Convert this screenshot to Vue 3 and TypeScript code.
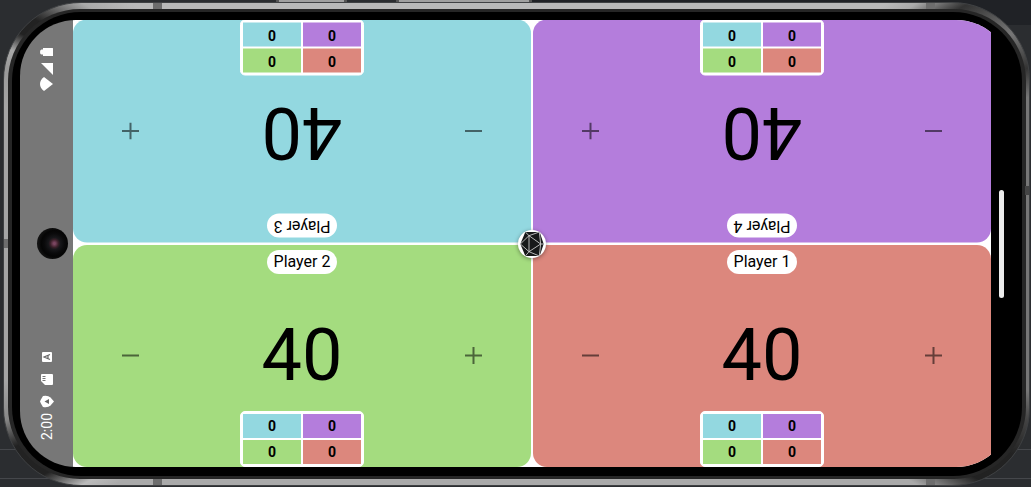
<script setup lang="ts">
import { ref } from 'vue'

type Tone = 'cyan' | 'purple' | 'green' | 'red'

interface Player {
  id: number
  name: string
  tone: Tone
  life: number
  flipped: boolean
  damage: number[]
}

const players = ref<Player[]>([
  { id: 3, name: 'Player 3', tone: 'cyan', life: 40, flipped: true, damage: [0, 0, 0, 0] },
  { id: 4, name: 'Player 4', tone: 'purple', life: 40, flipped: true, damage: [0, 0, 0, 0] },
  { id: 2, name: 'Player 2', tone: 'green', life: 40, flipped: false, damage: [0, 0, 0, 0] },
  { id: 1, name: 'Player 1', tone: 'red', life: 40, flipped: false, damage: [0, 0, 0, 0] },
])

const seats: Tone[][] = [['cyan', 'purple'], ['green', 'red']]

// Flipped cards are turned half a circle, so their seat map is read backwards.
function seatRows(p: Player): Tone[][] {
  return p.flipped ? [...seats].reverse().map((row) => [...row].reverse()) : seats
}
</script>

<template>
  <div class="desk">
    <i class="key key-power"></i>
    <i class="key key-volume"></i>
    <div class="phone">
      <i class="seam seam-top seam-start"></i>
      <i class="seam seam-top seam-end"></i>
      <i class="seam seam-bottom seam-start"></i>
      <i class="seam seam-bottom seam-end"></i>
      <i class="seam seam-left"></i>
      <i class="seam seam-right"></i>
      <div class="rim">
        <div class="bezel">
          <div class="screen">
            <header class="status">
              <svg class="glyph" width="14" height="10" viewBox="0 0 14 10">
                <path fill="#fff" d="M3 1h9.500q.5 0 .5.5v7q0 .5-.5.5H3V7.500H1.500Q0 7.500 0 5t1.500-2.500H3z" />
              </svg>
              <svg class="glyph signal" width="14" height="14" viewBox="0 0 14 14">
                <path fill="#fff" d="M1 1h12v12z" />
              </svg>
              <svg class="glyph" width="14" height="16" viewBox="0 0 14 16">
                <path fill="#fff" d="M13 8 4 15Q0 12 0 8t4-7z" />
              </svg>
              <span class="spacer"></span>
              <svg class="glyph" width="14" height="10" viewBox="0 0 14 10">
                <rect x="2" width="10" height="10" rx="1" fill="#fff" />
                <path fill="none" stroke="#666" stroke-width="1.200" d="M10 2.500 4 5l6 2.500M8 3v4" />
              </svg>
              <svg class="glyph sd" width="14" height="12" viewBox="0 0 14 12">
                <path fill="#fff" d="M2 0h10q1 0 1 1v9q0 1-1 1H5L1 7V1q0-1 1-1z" />
                <path stroke="#777" stroke-width="1" d="M2.500 2.500h3M2.500 4.500h3M2.500 6.500h3" />
              </svg>
              <svg class="glyph shield" width="14" height="13" viewBox="0 0 14 13">
                <path fill="#fff" d="M0 6.500Q1 4 3 1q5-1 7.500 1.500L14 6.500l-3.500 4Q8 13 3 12 1 9 0 6.500z" />
                <path fill="#666" d="M4.500 6.500 9 4v5z" />
              </svg>
              <time class="clock">2:00</time>
            </header>
            <i class="camera"></i>

            <main class="board">
              <section
                v-for="p in players"
                :key="p.id"
                class="card"
                :class="[p.tone, { flipped: p.flipped }]"
              >
                <div class="controls">
                  <button type="button" :aria-label="`${p.name}: lose life`" @click="p.life--">
                    <svg width="17" height="17" viewBox="0 0 17 17"><path d="M0 8.500h17" /></svg>
                  </button>
                  <output class="life">{{ p.life }}</output>
                  <button type="button" :aria-label="`${p.name}: gain life`" @click="p.life++">
                    <svg width="17" height="17" viewBox="0 0 17 17"><path d="M0 8.500h17M8.500 0v17" /></svg>
                  </button>
                </div>
                <h2 class="name">{{ p.name }}</h2>
                <table class="damage" :aria-label="`Damage dealt to ${p.name}`">
                  <tbody>
                    <tr v-for="(row, r) in seatRows(p)" :key="r">
                      <td v-for="(tone, c) in row" :key="c" :class="tone">{{ p.damage[r * 2 + c] }}</td>
                    </tr>
                  </tbody>
                </table>
              </section>
              <button type="button" class="dice" aria-label="Roll dice">
                <svg width="24" height="26" viewBox="0 0 72 78">
                  <path fill="#17191a" d="M16 3h43l12 36-12 36H16L1 39z" />
                  <path
                    fill="none"
                    stroke="#d8d8d8"
                    stroke-width="2.500"
                    d="M27 14v48l35-23zM27 14 1 39l26 23 31 13 4-36-4-36zM16 3l11 11M16 75l11-13M62 39h9"
                  />
                </svg>
              </button>
            </main>

            <nav class="gesture"><i class="handle"></i></nav>
          </div>
        </div>
      </div>
    </div>
  </div>
</template>

<style>
body {
  margin: 0;
  background: #2b2d30;
}
</style>

<style scoped>
.desk {
  position: relative;
  box-sizing: border-box;
  display: flex;
  min-height: 100vh;
  padding: 2px 1px 1px 3px;
  background:
    linear-gradient(#45474b, #45474b) 0 449px / 100% 1px no-repeat,
    linear-gradient(#45474b, #45474b) 0 478px / 100% 1px no-repeat,
    linear-gradient(#202226, #202226) 100% 0 / 50% 25px no-repeat,
    #2b2d30;
  font-family: Roboto, "Liberation Sans", sans-serif;
  color: #000;
}

.key {
  position: absolute;
  top: 0;
  height: 2px;
  background: #a0a0a0;
  border: solid #555;
  border-width: 0 3px;
}

.key-power {
  left: 276px;
  width: 65px;
}

.key-volume {
  left: 396px;
  width: 130px;
}

.phone {
  position: relative;
  flex: 1;
  display: flex;
  box-sizing: border-box;
  padding: 6px 3px 6px 4px;
  border: 1px solid #3f4143;
  border-radius: 78px;
  background: conic-gradient(
    #b9b9b9 0 57deg,
    #aaa 59deg,
    #333 62deg,
    #777 67deg,
    #333 71deg,
    #777 74deg,
    #777 106deg,
    #444 109deg,
    #222 113deg,
    #222 117deg,
    #aaa 121deg,
    #aaa 239deg,
    #bbb 241deg,
    #222 244deg,
    #222 248deg,
    #888 251deg,
    #a5a5a5 255deg,
    #a5a5a5 285deg,
    #999 289deg,
    #aaa 291deg,
    #222 293deg,
    #222 295deg,
    #aaa 299deg,
    #b9b9b9 302deg
  );
}

.seam {
  position: absolute;
  background: #6d6d6d;
}

.seam-top,
.seam-bottom {
  width: 9px;
  height: 6px;
}

.seam-top { top: 0; }
.seam-bottom { bottom: 0; }
.seam-start { left: 149px; }
.seam-end { right: 94px; }

.seam-left,
.seam-right {
  width: 4px;
  height: 9px;
}

.seam-left { left: 0; top: 236px; }
.seam-right { right: 0; top: 183px; background: #444; }

.rim {
  flex: 1;
  display: flex;
  padding: 3px 4px;
  border-radius: 72px;
  background: #262626;
}

.bezel {
  flex: 1;
  display: flex;
  box-sizing: border-box;
  padding: 8px 10px 9px 8px;
  border-radius: 69px;
  background: #000;
}

.screen {
  position: relative;
  flex: 1;
  display: flex;
  overflow: hidden;
  border-radius: 56px;
}

.status {
  flex: none;
  box-sizing: border-box;
  width: 53px;
  display: flex;
  flex-direction: column;
  align-items: center;
  padding: 27px 0;
  background: #777;
}

.glyph {
  display: block;
  flex: none;
}

.signal { margin-top: 5px; }

.spacer { flex: 1; }

.sd { margin-top: 12px; }

.shield { margin: 9px 0 5px; }

.clock {
  writing-mode: vertical-rl;
  transform: rotate(180deg);
  font-size: 14px;
  line-height: 16px;
  color: #fff;
}

.camera {
  position: absolute;
  left: 17px;
  top: calc(50% - 16px);
  width: 31px;
  height: 31px;
  border-radius: 50%;
  background: radial-gradient(circle at 56% 50%, #7a4560 0 1px, #3a2029 4px, #17171a 6px, #0a0a0b 10px, #050505 13px, #111 16px);
}

.board {
  position: relative;
  flex: 1;
  display: grid;
  grid-template-columns: 1fr 1fr;
  grid-template-rows: 1fr 1fr;
  gap: 2px;
  background: #fff;
}

.card {
  display: grid;
  grid-template-columns: 1fr;
  grid-template-rows: 1fr;
  justify-items: center;
  overflow: hidden;
  border-radius: 14px;
}

.card > * {
  grid-area: 1 / 1;
}

.flipped {
  transform: rotate(180deg);
}

.cyan { background: #93d8e0; }
.purple { background: #b47ddc; }
.green { background: #a4dc7f; }
.red { background: #dc877d; }

.controls {
  justify-self: stretch;
  display: grid;
  grid-template-columns: 1fr 2fr 1fr;
}

.controls button {
  display: grid;
  place-items: center;
  padding: 0;
  border: 0;
  background: none;
}

.controls path {
  stroke: rgba(0, 0, 0, 0.54);
  stroke-width: 2;
}

.life {
  align-self: center;
  text-align: center;
  font-size: 72px;
  line-height: 84px;
}

.name {
  align-self: start;
  margin: 5px 0 0;
  padding: 0 7px;
  border-radius: 12px;
  background: #fff;
  font-size: 16px;
  font-weight: 400;
  line-height: 24px;
}

.damage {
  align-self: end;
  box-sizing: border-box;
  border: 1px solid #fff;
  border-radius: 5px;
  border-collapse: separate;
  border-spacing: 2px;
  background: #fff;
}

.damage td {
  box-sizing: border-box;
  width: 58px;
  height: 24px;
  padding: 0;
  text-align: center;
  font-size: 14px;
  font-weight: 700;
  line-height: 24px;
}

.dice {
  position: absolute;
  left: 50%;
  top: 50%;
  display: grid;
  place-items: center;
  width: 28px;
  height: 28px;
  margin: -14px;
  padding: 0;
  border: 0;
  border-radius: 50%;
  background: #fff;
  box-shadow: 0 1px 4px rgba(0, 0, 0, 0.4);
}

.gesture {
  flex: none;
  width: 21px;
  display: grid;
  place-items: center;
  background: #000;
}

.handle {
  width: 5px;
  height: 108px;
  border-radius: 3px;
  background: #ececec;
}
</style>
